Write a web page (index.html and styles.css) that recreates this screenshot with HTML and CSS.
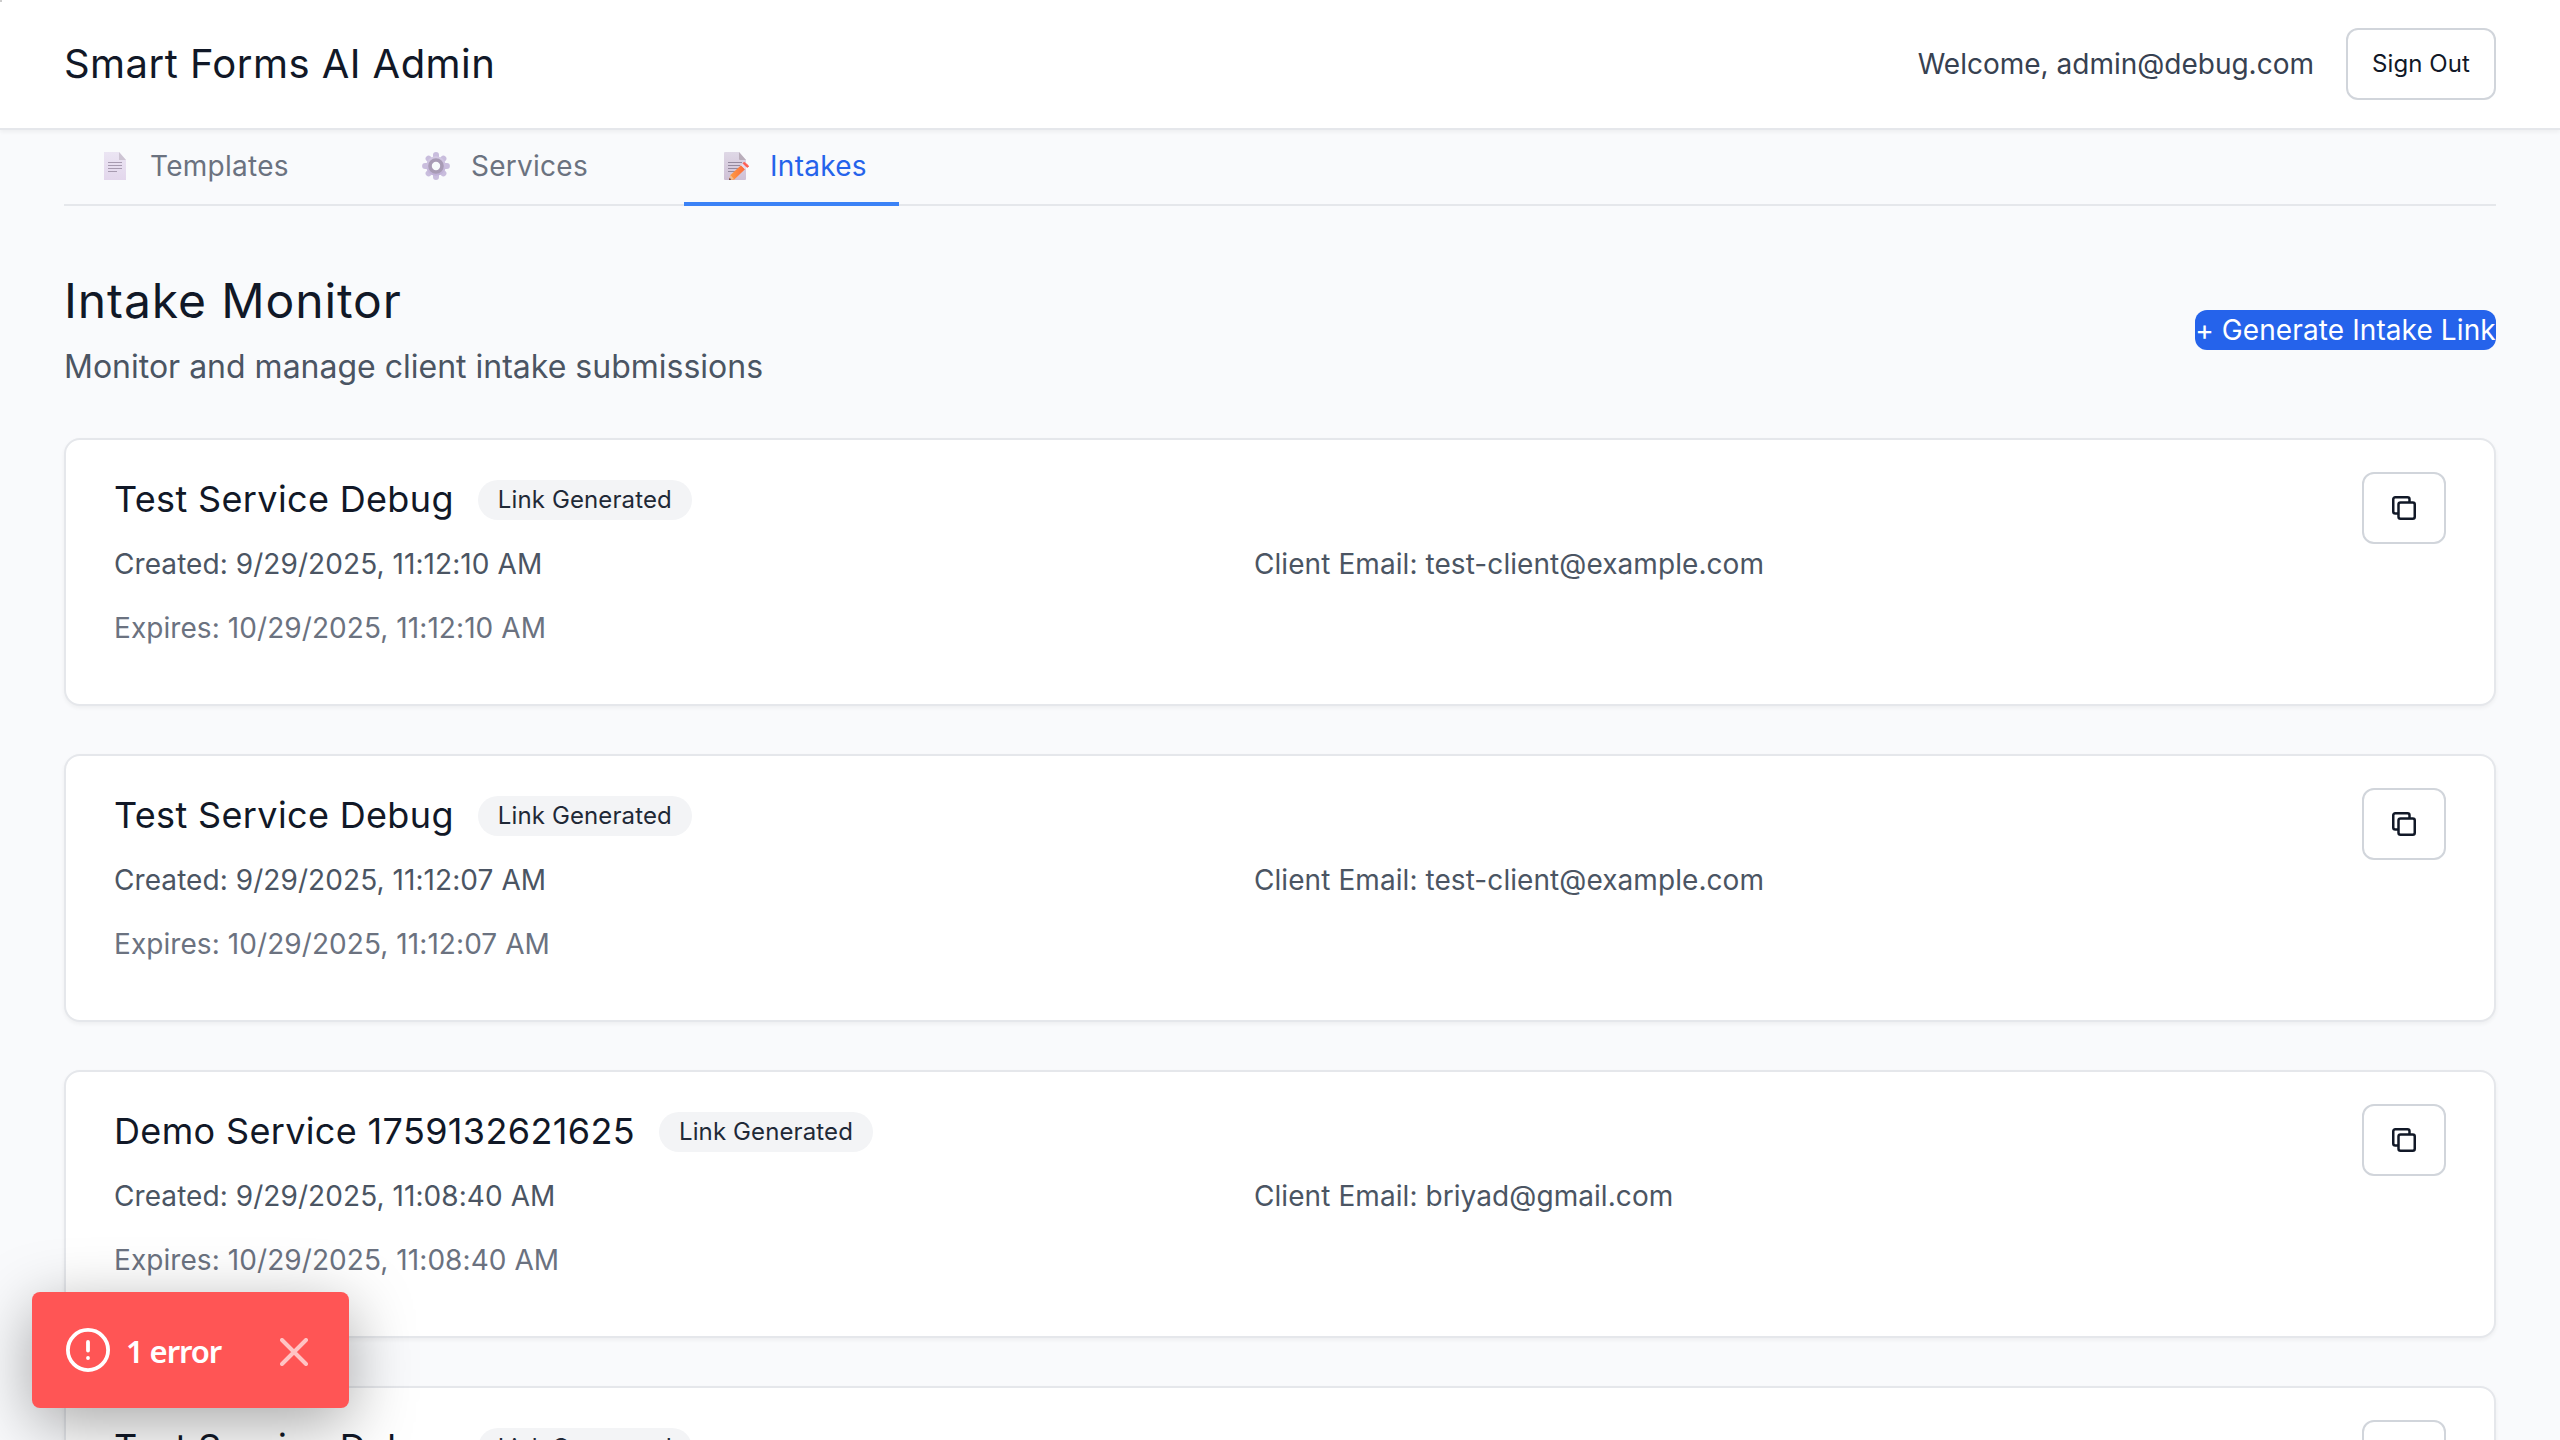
FILE: index.html
```html
<!DOCTYPE html>
<html lang="en">
<head>
<meta charset="utf-8">
<title>Smart Forms AI Admin</title>
<link rel="stylesheet" href="styles.css">
</head>
<body>
<svg class="sprite" aria-hidden="true">
  <symbol id="copy" viewBox="0 0 24 24">
    <g fill="none" stroke="currentColor" stroke-width="2.5">
      <rect x="6.5" y="6.5" width="16.25" height="16.25" rx="2"/>
      <path d="M6.5 17.5H3.25A2 2 0 0 1 1.25 15.5V3.25A2 2 0 0 1 3.25 1.25H15.5A2 2 0 0 1 17.5 3.25V6.5"/>
    </g>
  </symbol>
</svg>
<header class="header">
  <div class="brand">Smart Forms AI Admin</div>
  <div class="account">
    <span class="welcome">Welcome, admin@debug.com</span>
    <button class="btn sign-out">Sign Out</button>
  </div>
</header>
<main class="main">
  <nav class="tabs">
    <a class="tab">
      <svg class="tab-icon" viewBox="0 0 28 28">
        <defs><linearGradient id="page" x1="0" y1="0" x2="0" y2="1"><stop offset="0" stop-color="#ebe5f3"/><stop offset="1" stop-color="#e3d7ec"/></linearGradient></defs>
        <path d="M3 0H18L25 8V28H3Z" fill="url(#page)"/>
        <path d="M18 0L25 8H18Z" fill="#cdc4d3"/>
        <path d="M7 10.5H21M7 13.5H21M7 16.5H21M7 19.5H16" stroke="#a79bb0" stroke-width="1.1"/>
      </svg>
      <span>Templates</span>
    </a>
    <a class="tab">
      <svg class="tab-icon" viewBox="0 0 28 28">
        <defs><linearGradient id="gear" x1="0" y1="0" x2="0" y2="1"><stop offset="0" stop-color="#d5cbe4"/><stop offset="1" stop-color="#bfafd6"/></linearGradient></defs>
        <path d="M14 3.1V24.9M3.1 14H24.9M6.6 6.6L21.4 21.4M21.4 6.6L6.6 21.4" stroke="#c9bddd" stroke-width="6" stroke-linecap="round"/>
        <circle cx="14" cy="14" r="9.8" fill="url(#gear)"/>
        <circle cx="14" cy="14" r="6" fill="#f8fafc" stroke="#a89bb5" stroke-width="3.6"/>
      </svg>
      <span>Services</span>
    </a>
    <a class="tab active">
      <svg class="tab-icon" viewBox="0 0 28 28">
        <defs>
          <linearGradient id="memo" x1="0" y1="0" x2="0" y2="1"><stop offset="0" stop-color="#dfd8e6"/><stop offset="1" stop-color="#cfc0d6"/></linearGradient>
          <linearGradient id="pencil" x1="0" y1="0" x2="1" y2="0"><stop offset="0" stop-color="#ffa043"/><stop offset="1" stop-color="#fb6a3c"/></linearGradient>
        </defs>
        <path d="M4 0H18L25 8V27Q25 28 24 28H4Q3 28 3 27V1Q3 0 4 0Z" fill="url(#memo)"/>
        <path d="M18 0L25 8H19Q18 8 18 7Z" fill="#b9adba"/>
        <path d="M7 10.5H21M7 13.5H19M7 16.5H17M7 19.5H14" stroke="#94899e" stroke-width="1.1"/>
        <path d="M8 28L9.5 23L20 13.2L24 17.2L13 27.8Z" fill="url(#pencil)"/>
        <path d="M8 28L9.5 23L13 27.2Z" fill="#f2be93"/>
        <path d="M8 28L8.6 26L10.2 27.6Z" fill="#4a3040"/>
        <path d="M20 13.2L22 11.3L26 15.3L24 17.2Z" fill="#e8dbec"/>
        <path d="M22 11.3L23.2 10.5Q24 10.5 27.6 14Q28 14.5 26 15.3Z" fill="#ff5c50" stroke="#ff5c50"/>
      </svg>
      <span>Intakes</span>
    </a>
  </nav>
  <section class="page-head">
    <div>
      <h1 class="title">Intake Monitor</h1>
      <p class="subtitle">Monitor and manage client intake submissions</p>
    </div>
    <button class="generate">+ Generate Intake Link</button>
  </section>
  <section class="cards">
    <article class="card">
      <div class="card-head"><h2 class="name">Test Service Debug</h2><span class="badge">Link Generated</span></div>
      <div class="details"><p>Created: 9/29/2025, 11:12:10 AM</p><p>Client Email: test-client@example.com</p></div>
      <p class="expires">Expires: 10/29/2025, 11:12:10 AM</p>
      <button class="btn copy"><svg class="copy-icon"><use href="#copy"/></svg></button>
    </article>
    <article class="card">
      <div class="card-head"><h2 class="name">Test Service Debug</h2><span class="badge">Link Generated</span></div>
      <div class="details"><p>Created: 9/29/2025, 11:12:07 AM</p><p>Client Email: test-client@example.com</p></div>
      <p class="expires">Expires: 10/29/2025, 11:12:07 AM</p>
      <button class="btn copy"><svg class="copy-icon"><use href="#copy"/></svg></button>
    </article>
    <article class="card">
      <div class="card-head"><h2 class="name">Demo Service 1759132621625</h2><span class="badge">Link Generated</span></div>
      <div class="details"><p>Created: 9/29/2025, 11:08:40 AM</p><p>Client Email: briyad@gmail.com</p></div>
      <p class="expires">Expires: 10/29/2025, 11:08:40 AM</p>
      <button class="btn copy"><svg class="copy-icon"><use href="#copy"/></svg></button>
    </article>
    <article class="card">
      <div class="card-head"><h2 class="name">Test Service Debug</h2><span class="badge">Link Generated</span></div>
      <button class="btn copy"><svg class="copy-icon"><use href="#copy"/></svg></button>
    </article>
  </section>
</main>
<aside class="toast">
  <svg class="alert-icon" viewBox="0 0 44 44" fill="none" stroke="#fff" stroke-width="3.8" stroke-linecap="round"><circle cx="22" cy="22" r="20.1"/><path d="M22 14V22.5M22 30V30.1"/></svg>
  <span class="toast-text">1 error</span>
  <svg class="close-icon" viewBox="0 0 28 28" fill="none" stroke="#ffc4c4" stroke-width="4" stroke-linecap="round"><path d="M2 2L26 26M26 2L2 26"/></svg>
</aside>
</body>
</html>
```
FILE: styles.css
```css
* { box-sizing: border-box; margin: 0; padding: 0; }
html { height: 1440px; overflow: hidden; }
body {
  height: 1440px;
  overflow: hidden;
  background: #f9fafc;
  color: #111827;
  font-family: Inter, "Liberation Sans", sans-serif;
  font-size: 28px;
  line-height: 40px;
}
button { font: inherit; letter-spacing: inherit; color: inherit; border: 0; }
h1, h2 { font-weight: 400; }
.sprite { display: none; }
.header {
  height: 130px;
  padding: 0 64px;
  display: flex;
  align-items: center;
  justify-content: space-between;
  background: linear-gradient(#ccc, #ccc) 0 0 / 2px 2px no-repeat #fff;
  border-bottom: 2px solid #e5e7eb;
  box-shadow: 0 2px 4px rgba(0, 0, 0, 0.05);
}
.brand { font-size: 40px; line-height: 56px; letter-spacing: 0.45px; }
.account { display: flex; align-items: center; gap: 32px; }
.welcome { color: #374151; }
.btn {
  display: flex;
  align-items: center;
  justify-content: center;
  height: 72px;
  background: #fff;
  border: 2px solid #d1d5db;
  border-radius: 12px;
}
.sign-out { width: 150px; font-size: 24px; letter-spacing: 0.08px; }
.main { padding: 0 64px; }
.tabs {
  display: flex;
  gap: 64px;
  height: 76px;
  border-bottom: 2px solid #e5e7eb;
  letter-spacing: 0.28px;
}
.tab {
  display: flex;
  gap: 21px;
  height: 76px;
  padding: 16px 32px 0 37px;
  color: #6b7280;
}
.tab-icon { width: 28px; height: 28px; margin-top: 6px; }
.tab.active { color: #2563eb; border-bottom: 4px solid #3b82f6; }
.page-head {
  display: flex;
  align-items: center;
  justify-content: space-between;
  padding: 63px 0 47px;
}
.title { font-size: 48px; line-height: 64px; letter-spacing: 0.9px; }
.subtitle { font-size: 32px; line-height: 48px; margin-top: 10px; color: #4b5563; }
.generate {
  width: 301px;
  height: 40px;
  margin-bottom: 1px;
  border-radius: 12px;
  background: #2563eb;
  color: #fff;
  letter-spacing: 0.1px;
  white-space: nowrap;
}
.cards { display: flex; flex-direction: column; gap: 48px; }
.card {
  position: relative;
  height: 268px;
  padding: 36px 48px;
  background: #fff;
  border: 2px solid #e5e7eb;
  border-radius: 16px;
  box-shadow: 0 2px 4px rgba(0, 0, 0, 0.05);
  letter-spacing: 0.07px;
}
.card-head { display: flex; align-items: center; gap: 24px; height: 48px; }
.name { margin-bottom: 2px; font-size: 36px; line-height: 48px; letter-spacing: 0.35px; }
.badge {
  padding: 0 20px;
  height: 40px;
  border-radius: 20px;
  background: #f3f4f6;
  color: #1f2937;
  font-size: 24px;
  letter-spacing: 0.12px;
}
.details { display: grid; grid-template-columns: 1140px 1fr; margin-top: 20px; color: #4b5563; }
.expires { margin-top: 24px; color: #6b7280; }
.copy { position: absolute; top: 32px; right: 48px; width: 84px; }
.copy-icon { width: 24px; height: 24px; }
.toast {
  position: absolute;
  left: 32px;
  top: 1292px;
  width: 317px;
  height: 116px;
  padding-left: 34px;
  display: flex;
  align-items: center;
  border-radius: 8px;
  background: #ff5555;
  color: #fff;
  box-shadow: 0 16px 64px rgba(0, 0, 0, 0.35);
}
.alert-icon { width: 44px; height: 44px; }
.toast-text {
  width: 154px;
  margin: 2px 0 0 16px;
  font-family: "Noto Sans", "Open Sans", sans-serif;
  font-size: 31px;
  font-weight: 600;
  letter-spacing: -1.1px;
}
.close-icon { width: 28px; height: 28px; margin-top: 4px; }
```
